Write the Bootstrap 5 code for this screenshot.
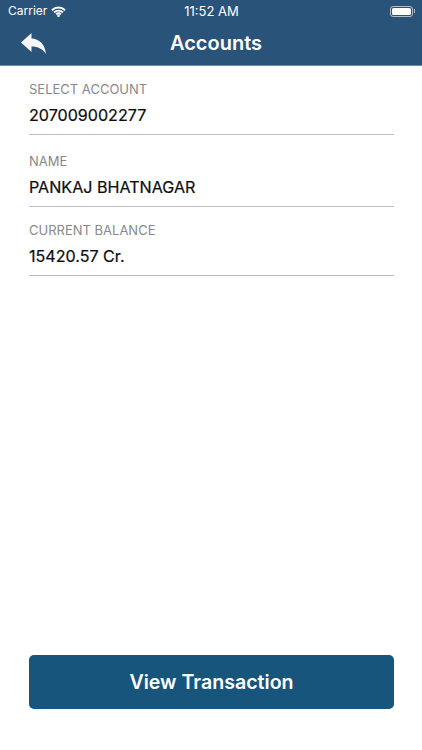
<!DOCTYPE html>
<html lang="en">
<head>
<meta charset="utf-8">
<title>Accounts</title>
<link href="https://cdn.jsdelivr.net/npm/bootstrap@5.3.0/dist/css/bootstrap.min.css" rel="stylesheet">
<style>
html,body{height:100%;}
body{font-family:Inter,"Liberation Sans",sans-serif;background:#fff;margin:0;overflow:hidden;}
.screen{height:750px;}
.app-head{background:#2a5379;color:#fff;height:66px;border-bottom:1px solid #6f8ca6;}
.status-row{height:22px;padding:0 7px 0 8px;font-size:13px;line-height:22px;font-weight:400;}
.status-row>div{flex:1 1 0;}
.carrier-name{font-size:12px;}
.title-row{height:43px;padding-left:10px;}
.title-row>.side{flex:1 1 0;padding-left:11px;}
.title-text{font-size:20px;font-weight:600;line-height:43px;}
.batt{width:23px;height:11px;border:1px solid #aebccb;border-radius:3px;padding:1px;}
.batt i{display:block;height:100%;background:#fff;border-radius:1.5px;}
.batt-tip{width:1px;height:4px;background:#aebccb;margin-left:1px;}
.form-wrap{padding:0 28px 0 29px;}
.fld{border-bottom:1px solid #bdbdbd;}
.fld-1{height:69px;padding-top:15px;}
.fld-2{height:72px;padding-top:18px;}
.fld-3{height:69px;padding-top:15px;}
.fld-label{font-size:13px;line-height:16px;color:#88888c;}
.fld-value{font-size:16.1px;line-height:20px;color:#0c0c0c;margin-top:8px;-webkit-text-stroke:.2px #0c0c0c;}
.act-btn{background:#17557d;color:#fff;font-size:19.6px;font-weight:600;height:54px;border-radius:5px;border:0;width:365px;margin-left:29px;margin-bottom:41px;padding:2px 0 0;}
.act-btn:hover{background:#17557d;color:#fff;}
</style>
</head>
<body>
<div class="screen d-flex flex-column">
  <header class="app-head">
    <div class="status-row d-flex align-items-center">
      <div class="d-flex align-items-center gap-1">
        <span class="carrier-name">Carrier</span>
        <svg width="15" height="11" viewBox="0 0 15 11" aria-hidden="true"><path d="M.9 4.200a9.600 9.600 0 0 1 13.200 0M3 6.400a6.600 6.600 0 0 1 9 0M5.100 8.400a3.500 3.500 0 0 1 4.800 0" fill="none" stroke="#fff" stroke-width="1.9"/><circle cx="7.500" cy="9.800" r="1.300" fill="#fff"/></svg>
      </div>
      <div class="text-center text-nowrap">11:52 AM</div>
      <div class="d-flex justify-content-end align-items-center">
        <div class="batt"><i></i></div><div class="batt-tip"></div>
      </div>
    </div>
    <div class="title-row d-flex align-items-center">
      <div class="side d-flex align-items-center">
        <svg width="25" height="21" viewBox="0 0 25 21" aria-hidden="true"><path d="M0 9.500 10.500 0v5.600C18 6 24 11 25 21c-3-5-8-7.500-14.500-7.500V19Z" fill="#f4f6f8"/></svg>
      </div>
      <div class="title-text">Accounts</div>
      <div class="side"></div>
    </div>
  </header>
  <main class="form-wrap flex-grow-1">
    <div class="fld fld-1"><div class="fld-label">SELECT ACCOUNT</div><div class="fld-value">207009002277</div></div>
    <div class="fld fld-2"><div class="fld-label">NAME</div><div class="fld-value">PANKAJ BHATNAGAR</div></div>
    <div class="fld fld-3"><div class="fld-label">CURRENT BALANCE</div><div class="fld-value">15420.57 Cr.</div></div>
  </main>
  <button type="button" class="btn act-btn">View Transaction</button>
</div>
<script src="https://cdn.jsdelivr.net/npm/bootstrap@5.3.0/dist/js/bootstrap.bundle.min.js"></script>
</body>
</html>
